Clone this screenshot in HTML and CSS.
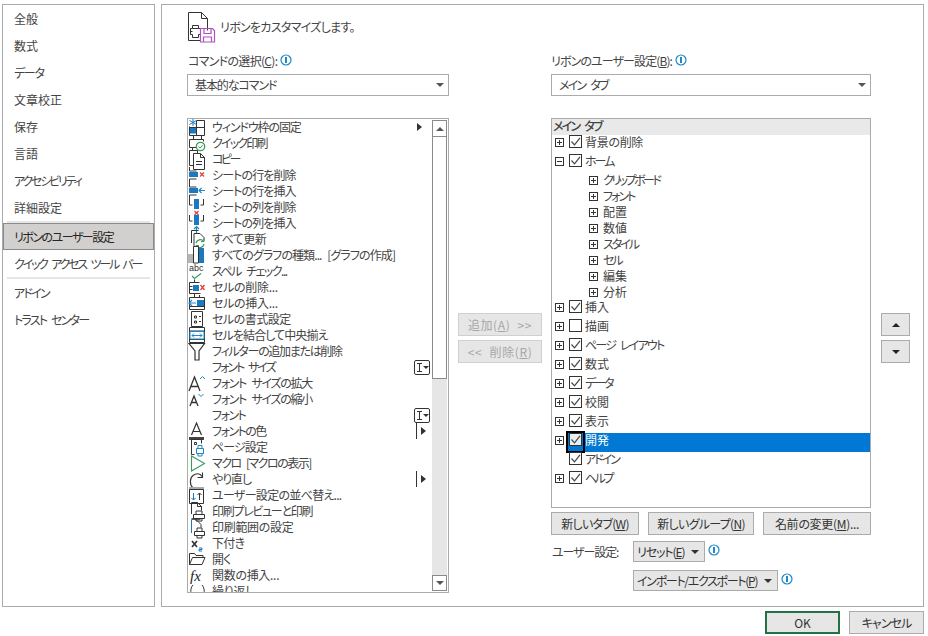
FILE: index.html
```html
<!DOCTYPE html>
<html lang="ja">
<head>
<meta charset="utf-8">
<title>リボンのユーザー設定</title>
<link rel="stylesheet" href="styles.css">
</head>
<body>
<svg class="defs" width="0" height="0">
  <symbol id="info" viewBox="0 0 12 12"><circle cx="6" cy="6" r="5" fill="#fff" stroke="#1c87c9" stroke-width="1.2"/><path d="M6 3v6" stroke="#1c87c9" stroke-width="2"/></symbol>
  <symbol id="chk" viewBox="0 0 11 11"><path d="M1.500 5.500l3 3.300 5.500-7" fill="none" stroke="#444" stroke-width="1.200"/></symbol>
</svg>
<div class="app">
  <div class="main">
    <nav class="nav">
      <div class="nav-item">全般</div>
      <div class="nav-item">数式</div>
      <div class="nav-item l13">データ</div>
      <div class="nav-item">文章校正</div>
      <div class="nav-item">保存</div>
      <div class="nav-item">言語</div>
      <div class="nav-item l22">アクセシビリティ</div>
      <div class="nav-item">詳細設定</div>
      <div class="nav-sep"></div>
      <div class="nav-item active l15">リボンのユーザー設定</div>
      <div class="nav-item l22">クイック アクセス ツール バー</div>
      <div class="nav-sep"></div>
      <div class="nav-item l18">アドイン</div>
      <div class="nav-item l18">トラスト センター</div>
    </nav>
    <section class="panel">
      <header class="head">
        <svg class="head-ic" width="28" height="31" viewBox="0 0 28 31" fill="none">
          <path d="M12 28.500H.5V.5h13l6 6v12M13.500 .5v6h6" stroke="#333"/>
          <path d="M4.500 13.500h6v3h2v6h-2v3h-6v-3h-2v-6h2zM4.500 16.500h6M2.500 19.500h2" stroke="#333"/>
          <path d="M12.500 16.500h12l2 2v11.500h-14zM16 16.500v5h7v-5M15.500 30v-5h8v5" stroke="#b14fc4" stroke-width="1.200"/>
        </svg>
        <span class="head-text l07">リボンをカスタマイズします。</span>
      </header>
      <div class="cols">
        <div class="col-left">
          <div class="lbl"><span class="l07">コマンドの選択(<u>C</u>):</span><svg class="info"><use href="#info"/></svg></div>
          <div class="select"><span class="l11">基本的なコマンド</span><i class="caret"></i></div>
          <div class="list">
            <div class="rows">
              <div class="row"><svg class="ic" viewBox="0 0 18 18" fill="none" stroke="#333"><path d="M1.500 9.500h7v6h-7z" fill="#1c78c0" stroke="none"/><path d="M8.500 2.500h8v15h-15v-9M1.500 9.500h15M8.500 2.500v15" /><path d="M5 1v7M1.500 2.500l7 4M8.500 2.500l-7 4" stroke="#1c78c0"/></svg><span class="t l11">ウィンドウ枠の固定</span><i class="arrow"></i></div>
              <div class="row"><svg class="ic" viewBox="0 0 18 18" fill="none" stroke="#333"><path d="M5.500 1.500h8v4h-8zM6 16.500H4.500v-3h-3v-8h14v2M4.500 13.500h4"/><circle cx="12.500" cy="12.500" r="4.200" stroke="#3a9c5b" stroke-width="1.300"/><path d="M10.500 12.500l1.500 1.700 2.700-3" stroke="#3a9c5b"/></svg><span class="t l18">クイック印刷</span></div>
              <div class="row"><svg class="ic" viewBox="0 0 18 18" fill="none" stroke="#333"><path d="M5 15.500H1.500V.5h8v3"/><path d="M5.500 3.500h7l4 4v12h-11zM12.500 3.500v4h4M8 11.500h6M8 14.500h6"/></svg><span class="t l25">コピー</span></div>
              <div class="row"><svg class="ic" viewBox="0 0 18 18" fill="none" stroke="#333"><path d="M1 6h9v5H1z" fill="#1c78c0" stroke="none"/><path d="M1.500 1v4h7M1.500 18v-5h7"/><path d="M12 6.500l4 4M16 6.500l-4 4" stroke="#e0433b" stroke-width="1.300"/></svg><span class="t l09">シートの行を削除</span></div>
              <div class="row"><svg class="ic" viewBox="0 0 18 18" fill="none" stroke="#333"><path d="M1 6h9v5H1z" fill="#1c78c0" stroke="none"/><path d="M1.500 1v4h7M1.500 18v-5h7"/><path d="M17 8.500h-6M13.500 6l-2.500 2.500 2.500 2.500" stroke="#1c87c9" stroke-width="1.200"/></svg><span class="t l09">シートの行を挿入</span></div>
              <div class="row"><svg class="ic" viewBox="0 0 18 18" fill="none" stroke="#333"><path d="M6 1h5v10H6z" fill="#1c78c0" stroke="none"/><path d="M1.500 1v6h3M15.500 1v6h-3"/><path d="M6.500 13l4 4M10.500 13l-4 4" stroke="#e0433b" stroke-width="1.300"/></svg><span class="t l09">シートの列を削除</span></div>
              <div class="row"><svg class="ic" viewBox="0 0 18 18" fill="none" stroke="#333"><path d="M6 1h5v10H6z" fill="#1c78c0" stroke="none"/><path d="M1.500 1v6h3M15.500 1v6h-3"/><path d="M8.500 19v-6M6 15l2.500-2.500L11 15" stroke="#1c87c9" stroke-width="1.200"/></svg><span class="t l09">シートの列を挿入</span></div>
              <div class="row"><svg class="ic" viewBox="0 0 18 18" fill="none" stroke="#333"><path d="M3.500 13V.5h7M6 16V3.500h6l4 4v3"/><path d="M8 13a4.500 4.500 0 0 1 7.500-2M16 14a4.500 4.500 0 0 1-7.500 2.500" stroke="#3a9c5b" stroke-width="1.300"/><path d="M16 8.500v3h-3M8 18.500v-3h3" stroke="#3a9c5b"/></svg><span class="t l05">すべて更新</span></div>
              <div class="row"><svg class="ic" viewBox="0 0 18 18" fill="none" stroke="#333"><path d="M0 8h5v9H0z" fill="#b5b5b5" stroke="none"/><path d="M11 2h5v15h-5z" fill="#1c78c0" stroke="none"/><path d="M5.500 17V.5h5V17z" fill="#fff"/></svg><span class="t l09">すべてのグラフの種類... [グラフの作成]</span></div>
              <div class="row"><svg class="ic" viewBox="0 0 18 18" fill="none"><text class="abc" x="1" y="9">abc</text><path d="M4 14l2.500 2.500L13 11.500" stroke="#3a9c5b" stroke-width="1.200"/></svg><span class="t l15">スペル チェック...</span></div>
              <div class="row"><svg class="ic" viewBox="0 0 18 18" fill="none" stroke="#333"><path d="M5 7h6v6H5z" fill="#1c78c0" stroke="none"/><path d="M1.500 4.500h10M1.500 15.500h11M1.500 4.500v11M1.500 8.500h3M1.500 11.500h3M6.500 1.500v3M6.500 15.500v3"/><path d="M12.500 7l4 5M16.500 7l-4 5" stroke="#e0433b" stroke-width="1.300"/></svg><span class="t l03">セルの削除...</span></div>
              <div class="row"><svg class="ic" viewBox="0 0 18 18" fill="none" stroke="#333"><path d="M9 6h7v6H9z" fill="#1c78c0" stroke="none"/><path d="M1.500 3.500h15v12h-15zM6.500 1v2M11.500 1v2M1.500 12.500h15"/><path d="M8 9H1M4 6L1 9l3 3" stroke="#1c87c9" stroke-width="1.200"/></svg><span class="t l03">セルの挿入...</span></div>
              <div class="row"><svg class="ic" viewBox="0 0 18 18" fill="none" stroke="#333"><path d="M3.500 1.500h11v15h-11zM6.500 6h2v2h-2zM6.500 11h2v2h-2zM11 6.500h2M11 11.500h2"/></svg><span class="t l05">セルの書式設定</span></div>
              <div class="row"><svg class="ic" viewBox="0 0 18 18" fill="none" stroke="#333"><path d="M1.500 1.500h15v15h-15zM1.500 5h15M1.500 13.500h15" /><path d="M2 5.500h14v7.500H2z" fill="#fff" stroke="#1c87c9"/><path d="M4 9.500h10M6 7.500l-2 2 2 2M12 7.500l2 2-2 2" stroke="#1c87c9"/></svg><span class="t l09">セルを結合して中央揃え</span></div>
              <div class="row"><svg class="ic" viewBox="0 0 18 18" fill="none" stroke="#333" stroke-width="1.200"><path d="M1 1.500h15.500L11 9v9H7V9z"/></svg><span class="t l13">フィルターの追加または削除</span></div>
              <div class="row"><span class="ic-gap"></span><span class="t l20">フォント サイズ</span><i class="ibox"></i></div>
              <div class="row"><svg class="ic" viewBox="0 0 18 18" fill="none"><path d="M1 17L6.500 3 12 17M3 12.500h7" stroke="#333" stroke-width="1.300"/><path d="M12 5l2.500-2.500L17 5" stroke="#1c87c9"/></svg><span class="t l13">フォント サイズの拡大</span></div>
              <div class="row"><svg class="ic" viewBox="0 0 18 18" fill="none"><path d="M2 16L6 6l4 10M3.500 12.500h5" stroke="#333" stroke-width="1.300"/><path d="M10.500 4l2.500 2.500L15.500 4" stroke="#1c87c9"/></svg><span class="t l13">フォント サイズの縮小</span></div>
              <div class="row"><span class="ic-gap"></span><span class="t l15">フォント</span><i class="ibox"></i></div>
              <div class="row"><svg class="ic" viewBox="0 0 18 18" fill="none"><path d="M3.500 13L8.500 1l5 12M5 9.500h7" stroke="#333" stroke-width="1.200"/><path d="M1 15h15v3H1z" fill="#444"/></svg><span class="t l15">フォントの色</span><i class="split"></i></div>
              <div class="row"><svg class="ic" viewBox="0 0 18 18" fill="none" stroke="#333"><path d="M3.500 16.500V1.500h10v4M3.500 16.500h3"/><path d="M6.500 4.500h2v2h-2z"/><path d="M8.500 10.500h7v5h-7zM10 10.500v-3h4v3M10 15.500v2.500h4v-2.500" stroke="#1c87c9"/></svg><span class="t l09">ページ設定</span></div>
              <div class="row"><svg class="ic" viewBox="0 0 18 18" fill="none"><path d="M3.500 2v15l13-7.500z" stroke="#3a9c5b" stroke-width="1.100"/></svg><span class="t l15">マクロ [マクロの表示]</span></div>
              <div class="row"><svg class="ic" viewBox="0 0 18 18" fill="none" stroke="#333" stroke-width="1.100"><path d="M5 18C1.500 15 1.500 8 5 5.500 8 3 12 3 14 6.500M14.500 2.500v5h-5"/></svg><span class="t l11">やり直し</span><i class="split"></i></div>
              <div class="row"><svg class="ic" viewBox="0 0 18 18" fill="none" stroke="#333"><path d="M1 1h15v3H1z" fill="#aaa" stroke="none"/><path d="M1.500 3.500h14v14h-14z"/><path d="M5.500 7v7M3.500 12l2 2 2-2" stroke="#1c78c0"/><path d="M11.500 14V7M9.500 9l2-2 2 2"/></svg><span class="t l07">ユーザー設定の並べ替え...</span></div>
              <div class="row"><svg class="ic" viewBox="0 0 18 18" fill="none" stroke="#333"><path d="M3.500 12V.5h6l4 4v4M9.500.5v4h4"/><path d="M5.500 12.500h11v4h-11zM8 12.500V9h6v3.500M8 16.500V19h6v-2.500"/></svg><span class="t l13">印刷プレビューと印刷</span></div>
              <div class="row"><svg class="ic" viewBox="0 0 18 18" fill="none" stroke="#333"><path d="M3.500 1h9" stroke-width="1.600"/><path d="M3.500 15V1.500" stroke="#1c78c0"/><path d="M8 1.500l5 5v3"/><path d="M6.500 13.500h10v4h-10zM9 13.500V10h5v3.500M9 17.500V20h5v-2.500"/></svg><span class="t l03">印刷範囲の設定</span></div>
              <div class="row"><svg class="ic" viewBox="0 0 18 18" fill="none" stroke="#333" stroke-width="1.700"><path d="M4 7l5 6M9 7l-5 6"/><path d="M11 14h3v1.500h-3v1.500h3" stroke="#1c78c0" stroke-width="1"/></svg><span class="t l07">下付き</span></div>
              <div class="row"><svg class="ic" viewBox="0 0 18 18" fill="none" stroke="#333"><path d="M1.500 14.500v-11h5l1.500 2h7v2M1.500 14.500l3-7h12.500l-3 7z"/></svg><span class="t l09">開く</span></div>
              <div class="row"><svg class="ic" viewBox="0 0 18 18"><text class="fx" x="2" y="15">fx</text></svg><span class="t l03">関数の挿入...</span></div>
              <div class="row"><svg class="ic" viewBox="0 0 18 18" fill="none" stroke="#333"><path d="M5 3C2 6 2 13 5 16M14 3c3 3 3 10 0 13"/></svg><span class="t l03">繰り返し</span></div>
            </div>
            <div class="sbar">
              <div class="sbtn up"><i class="tri-up"></i></div>
              <div class="thumb"></div>
              <div class="track"></div>
              <div class="sbtn"><i class="tri-down"></i></div>
            </div>
          </div>
        </div>
        <div class="col-mid">
          <button class="btn dis"><span class="lp">追加(<u>A</u>) &gt;&gt;</span></button>
          <button class="btn dis"><span class="lp">&lt;&lt; 削除(<u>R</u>)</span></button>
        </div>
        <div class="col-right">
          <div class="lbl"><span class="l09">リボンのユーザー設定(<u>B</u>):</span><svg class="info"><use href="#info"/></svg></div>
          <div class="select"><span class="tab-name">メイン タブ</span><i class="caret"></i></div>
          <div class="tree">
            <div class="tree-head tab-name">メイン タブ</div>
            <div class="node"><i class="pm plus"></i><div class="nm"><svg class="cb"><use href="#chk"/></svg><span class="l03">背景の削除</span></div></div>
            <div class="node"><i class="pm minus"></i><div class="nm"><svg class="cb"><use href="#chk"/></svg><span class="l20">ホーム</span></div></div>
            <div class="kids">
              <div class="kid"><i class="pm plus"></i><span class="l25">クリップボード</span></div>
              <div class="kid"><i class="pm plus"></i><span class="l20">フォント</span></div>
              <div class="kid"><i class="pm plus"></i><span>配置</span></div>
              <div class="kid"><i class="pm plus"></i><span>数値</span></div>
              <div class="kid"><i class="pm plus"></i><span class="l20">スタイル</span></div>
              <div class="kid"><i class="pm plus"></i><span class="l20">セル</span></div>
              <div class="kid"><i class="pm plus"></i><span>編集</span></div>
              <div class="kid"><i class="pm plus"></i><span>分析</span></div>
            </div>
            <div class="node"><i class="pm plus"></i><div class="nm"><svg class="cb"><use href="#chk"/></svg><span>挿入</span></div></div>
            <div class="node"><i class="pm plus"></i><div class="nm"><svg class="cb"></svg><span>描画</span></div></div>
            <div class="node"><i class="pm plus"></i><div class="nm"><svg class="cb"><use href="#chk"/></svg><span class="l18">ページ レイアウト</span></div></div>
            <div class="node"><i class="pm plus"></i><div class="nm"><svg class="cb"><use href="#chk"/></svg><span>数式</span></div></div>
            <div class="node"><i class="pm plus"></i><div class="nm"><svg class="cb"><use href="#chk"/></svg><span class="l20">データ</span></div></div>
            <div class="node"><i class="pm plus"></i><div class="nm"><svg class="cb"><use href="#chk"/></svg><span>校閲</span></div></div>
            <div class="node"><i class="pm plus"></i><div class="nm"><svg class="cb"><use href="#chk"/></svg><span>表示</span></div></div>
            <div class="node sel"><i class="pm plus"></i><div class="nm"><svg class="cb"><use href="#chk"/></svg><span>開発</span><i class="focus"></i></div></div>
            <div class="node"><i class="pm none"></i><div class="nm"><svg class="cb"><use href="#chk"/></svg><span class="l20">アドイン</span></div></div>
            <div class="node"><i class="pm plus"></i><div class="nm"><svg class="cb"><use href="#chk"/></svg><span class="l25">ヘルプ</span></div></div>
          </div>
          <div class="btn-row">
            <button class="btn w88"><span class="l07">新しいタブ(<u>W</u>)</span></button>
            <button class="btn w106"><span class="l07">新しいグループ(<u>N</u>)</span></button>
            <button class="btn w108"><span class="l03">名前の変更(<u>M</u>)...</span></button>
          </div>
          <div class="reset-row">
            <span class="reset-lbl"><span class="l11">ユーザー設定:</span></span>
            <button class="btn drop w72"><span class="l11">リセット(<u>E</u>)</span><i class="tri-down"></i></button>
            <svg class="info"><use href="#info"/></svg>
          </div>
          <div class="import-row">
            <button class="btn drop w145"><span class="l13">インポート/エクスポート(<u>P</u>)</span><i class="tri-down"></i></button>
            <svg class="info"><use href="#info"/></svg>
          </div>
        </div>
        <div class="col-move">
          <button class="btn move"><i class="tri-up dark"></i></button>
          <button class="btn move"><i class="tri-down"></i></button>
        </div>
      </div>
    </section>
  </div>
  <footer class="foot">
    <button class="btn ok">OK</button>
    <button class="btn cancel"><span class="l09">キャンセル</span></button>
  </footer>
</div>
</body>
</html>
```

FILE: styles.css
```css
* { box-sizing: border-box; }
html, body { margin: 0; padding: 0; background: #fff; }
body {
  width: 928px; height: 636px; overflow: hidden;
  font-family: "Noto Sans CJK JP", "Noto Sans", sans-serif;
  font-size: 12px; line-height: 16px; color: #444;
  font-feature-settings: "palt" 1;
  word-spacing: 4px;
}
.defs { position: absolute; }
i { display: block; font-style: normal; }
u { text-underline-offset: 1px; }

.l03 { letter-spacing: -.3px; }
.l05 { letter-spacing: -.5px; }
.l07 { letter-spacing: -.7px; }
.l09 { letter-spacing: -.9px; }
.l11 { letter-spacing: -1.1px; }
.l13 { letter-spacing: -1.3px; }
.l15 { letter-spacing: -1.5px; }
.l18 { letter-spacing: -1.8px; }
.l20 { letter-spacing: -2px; }
.l22 { letter-spacing: -2.2px; }
.l25 { letter-spacing: -2.5px; }
.lp { letter-spacing: .6px; }
.tab-name { letter-spacing: -1.8px; }

.app { display: flex; flex-direction: column; padding: 4px 4px 0 2px; }
.main { display: flex; gap: 6px; height: 603px; }

/* left navigation */
.nav { width: 153px; border: 1px solid #ababab; }
.nav-item { height: 27px; padding-left: 11px; line-height: 27px; white-space: nowrap; }
.nav-sep { height: 2px; margin: 0 4px; background: #e6e6e6; }
.nav-item.active {
  background: #d2d0ce; border: 1px solid #8a8a8a; padding-left: 10px;
  line-height: 25px; color: #262626;
}

/* panel */
.panel { flex: 1; border: 1px solid #ababab; padding: 7px 0 0 25px; }
.head { display: flex; align-items: center; height: 31px; }
.head-ic { display: block; flex: none; margin-left: 1px; }
.head-text { margin-left: 4px; margin-top: -1px; }
.cols { display: flex; margin-top: 10px; }
.col-left { width: 262px; margin-right: 9px; }
.col-mid { width: 84px; margin-right: 9px; padding-top: 260px; display: flex; flex-direction: column; gap: 4px; }
.col-right { width: 320px; margin-right: 10px; }
.col-move { width: 29px; padding-top: 260px; display: flex; flex-direction: column; gap: 4px; }

.lbl { height: 16px; display: flex; align-items: center; white-space: nowrap; }
.col-left .lbl { padding-left: 1px; }
.info { width: 12px; height: 12px; flex: none; margin-left: 3px; margin-top: -3px; }
.select {
  height: 22px; margin-top: 5px; border: 1px solid #ababab;
  display: flex; align-items: center; justify-content: space-between;
  padding: 0 4px 0 7px;
}
.caret { width: 0; height: 0; border: 4px solid transparent; border-top: 4px solid #555; border-bottom: 0; }

/* command list */
.list {
  height: 475px; margin-top: 22px; border: 1px solid #ababab;
  display: flex; overflow: hidden;
}
.rows { flex: 1; min-width: 0; overflow: hidden; padding-right: 2px; }
.row { height: 16px; display: flex; align-items: center; white-space: nowrap; }
.ic { width: 18px; height: 18px; flex: none; margin: -1px 6px -1px 0; overflow: visible; display: block; }
.ic-gap { width: 18px; flex: none; margin-right: 6px; }
.abc { font: 9px "Liberation Sans", sans-serif; fill: #333; }
.fx { font: italic 15px "Liberation Serif", serif; fill: #222; }
.t { flex: 1; }
.arrow { width: 0; height: 0; margin-right: 8px; border: 4px solid transparent; border-left: 5px solid #333; border-right: 0; }
.split { width: 14px; height: 16px; margin-right: 0; border-left: 1px solid #333; position: relative; }
.split::after { content: ""; position: absolute; left: 4px; top: 4px; border: 4px solid transparent; border-left: 5px solid #333; border-right: 0; }
.ibox {
  width: 16px; height: 15px; border: 1px solid #333; border-radius: 2px; position: relative;
  background: linear-gradient(#333,#333) 4px 2px/1px 9px no-repeat,
              linear-gradient(#333,#333) 2px 2px/5px 1px no-repeat,
              linear-gradient(#333,#333) 2px 10px/5px 1px no-repeat;
}
.ibox::after { content: ""; position: absolute; left: 8px; top: 5px; border: 3px solid transparent; border-top: 3px solid #333; border-bottom: 0; }

.sbar { width: 15px; flex: none; margin-right: 1px; display: flex; flex-direction: column; }
.sbtn { height: 16px; flex: none; background: #fff; border: 1px solid #8a8a8a; display: flex; align-items: center; justify-content: center; }
.sbtn.up { margin-top: 1px; border-bottom-width: 0; }
.thumb { height: 243px; flex: none; background: #fff; border: 1px solid #8a8a8a; }
.track { flex: 1; background: #e6e6e6; }
.sbar .sbtn:last-child { margin-bottom: 1px; }
.tri-up { width: 0; height: 0; border: 4px solid transparent; border-bottom: 4px solid #555; border-top: 0; }
.tri-down { width: 0; height: 0; border: 4px solid transparent; border-top: 4px solid #555; border-bottom: 0; }
.tri-up.dark { border-bottom-color: #222; }

/* buttons */
.btn {
  height: 23px; padding: 0; background: #e6e6e6; border: 1px solid #ababab;
  font: inherit; font-feature-settings: inherit; word-spacing: inherit; color: #333;
  display: flex; align-items: center; justify-content: center; white-space: nowrap;
}
.btn.dis { color: #a6a6a6; border-color: #d0d0d0; }
.btn.move .tri-down { border-top-color: #222; }
.w88 { width: 88px; } .w106 { width: 106px; } .w108 { width: 108px; }
.w72 { width: 72px; } .w145 { width: 145px; }
.drop { height: 21px; justify-content: space-between; padding: 0 5px 0 3px; }
.drop .tri-down { border-top-color: #333; }

/* tree */
.tree { height: 390px; margin-top: 22px; border: 1px solid #ababab; }
.tree-head { height: 16px; background: #e9e9e9; padding-left: 1px; line-height: 14px; font-weight: 500; }
.node { height: 19px; display: flex; align-items: flex-start; padding-left: 3px; white-space: nowrap; }
.pm { width: 9px; height: 9px; flex: none; margin-top: 3px; margin-right: 4px; border: 1px solid #333; }
.pm.none { border: 0; }
.plus {
  background: linear-gradient(#333,#333) center/5px 1px no-repeat,
              linear-gradient(#333,#333) center/1px 5px no-repeat;
}
.minus { background: linear-gradient(#333,#333) center/5px 1px no-repeat; }
.nm { flex: 1; height: 19px; display: flex; align-items: flex-start; padding-left: 1px; position: relative; line-height: 14px; }
.cb { width: 13px; height: 13px; flex: none; border: 1px solid #333; background: #fff; margin-right: 3px; }
.sel .nm { background: #0078d4; color: #fff; }
.sel .cb { background: #e9eef2; }
.focus { position: absolute; left: -2px; top: -2px; width: 19px; height: 22px; border: 2px solid #000; }
.kids { margin-top: -1px; }
.kid { height: 16px; display: flex; align-items: center; padding-left: 37px; white-space: nowrap; }
.kid .pm { margin-top: 0; margin-right: 5px; }
.btn-row { display: flex; justify-content: space-between; margin-top: 4px; }
.reset-row { display: flex; align-items: center; margin-top: 6px; height: 21px; padding-left: 1px; }
.reset-lbl { width: 81px; flex: none; }
.reset-row .info, .import-row .info { margin-left: 3px; margin-top: -4px; }
.import-row { display: flex; align-items: center; margin-top: 8px; padding-left: 82px; }

/* footer */
.foot { display: flex; justify-content: flex-end; gap: 9px; margin-top: 4px; }
.foot .btn { width: 75px; height: 23px; }
.btn.ok { border: 2px solid #217346; }
```
